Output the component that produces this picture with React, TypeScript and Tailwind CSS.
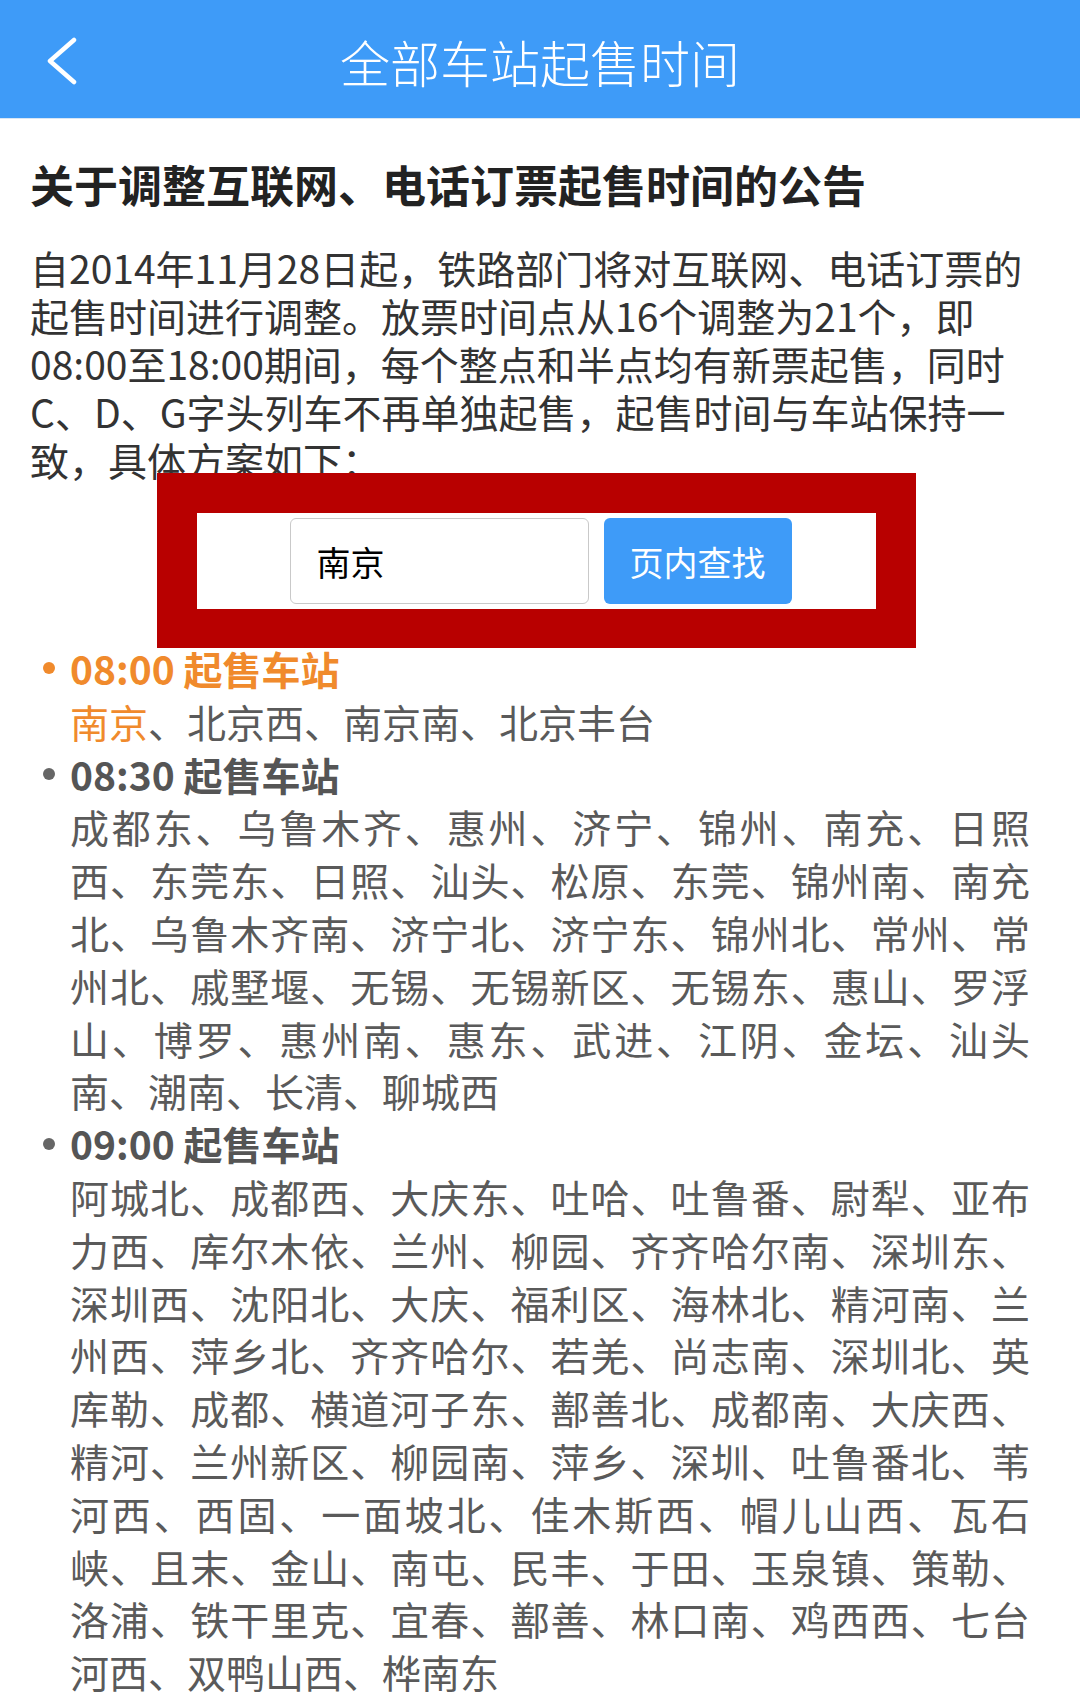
const font = "font-['Noto_Sans_CJK_SC','Noto_Sans',sans-serif]";

const query = "南京";

interface Group {
  time: string;
  stations: string[];
}

const groups: Group[] = [
  { time: "08:00", stations: ["南京", "北京西", "南京南", "北京丰台"] },
  {
    time: "08:30",
    stations: [
      "成都东", "乌鲁木齐", "惠州", "济宁", "锦州", "南充", "日照西", "东莞东", "日照", "汕头",
      "松原", "东莞", "锦州南", "南充北", "乌鲁木齐南", "济宁北", "济宁东", "锦州北", "常州",
      "常州北", "戚墅堰", "无锡", "无锡新区", "无锡东", "惠山", "罗浮山", "博罗", "惠州南",
      "惠东", "武进", "江阴", "金坛", "汕头南", "潮南", "长清", "聊城西",
    ],
  },
  {
    time: "09:00",
    stations: [
      "阿城北", "成都西", "大庆东", "吐哈", "吐鲁番", "尉犁", "亚布力西", "库尔木依", "兰州",
      "柳园", "齐齐哈尔南", "深圳东", "深圳西", "沈阳北", "大庆", "福利区", "海林北", "精河南",
      "兰州西", "萍乡北", "齐齐哈尔", "若羌", "尚志南", "深圳北", "英库勒", "成都", "横道河子东",
      "鄯善北", "成都南", "大庆西", "精河", "兰州新区", "柳园南", "萍乡", "深圳", "吐鲁番北",
      "苇河西", "西固", "一面坡北", "佳木斯西", "帽儿山西", "瓦石峡", "且末", "金山", "南屯",
      "民丰", "于田", "玉泉镇", "策勒", "洛浦", "铁干里克", "宜春", "鄯善", "林口南", "鸡西西",
      "七台河西", "双鸭山西", "桦南东",
    ],
  },
];

function Header() {
  return (
    <div className="grid h-[118px] grid-cols-[1fr_auto_1fr] items-center bg-[#3e9bf8] pt-[3px] shadow-[0_1px_0_#d8e6f5]">
      <div className="pl-[44px]">
        <svg width="36" height="48" viewBox="0 0 36 48" fill="none">
          <polyline
            points="30,3 6,24 30,45"
            stroke="white"
            strokeWidth="4.5"
            strokeLinecap="round"
            strokeLinejoin="round"
          />
        </svg>
      </div>
      <div className="text-[50px] leading-[60px] font-light text-white">全部车站起售时间</div>
      <div />
    </div>
  );
}

function SearchBox() {
  return (
    <div className="relative -mt-[10px] flex justify-center pr-[7px]">
      <div className="w-[759px] bg-[#b80000] p-[40px] pb-[39px]">
        <div className="flex h-[96px] items-center justify-center gap-[15px] bg-white pl-[8px]">
          <div className="flex h-[86px] w-[299px] items-center rounded-[6px] border border-[#c9c9c9] pl-[26px] text-[34px] text-black">
            {query}
          </div>
          <button className="flex h-[86px] w-[188px] items-center justify-center rounded-[6px] bg-[#3e9bf8] text-[34px] text-white">
            页内查找
          </button>
        </div>
      </div>
    </div>
  );
}

function GroupBlock({ group, index }: { group: Group; index: number }) {
  const active = group.stations.includes(query) && index === 0;
  return (
    <div>
      <div className="flex items-center gap-[15px]">
        <span
          className={`h-[12px] w-[12px] rounded-full ${active ? "bg-[#f08a2c]" : "bg-[#666]"}`}
        />
        <span
          className={`text-[39px] leading-[52.8px] font-bold ${active ? "text-[#f08a2c]" : "text-[#555]"}`}
        >
          {group.time} 起售车站
        </span>
      </div>
      <p className="pl-[27px] text-justify text-[39px] leading-[52.8px] text-[#5a5a5a]">
        {group.stations.map((s, i) => (
          <span key={s + i}>
            {i > 0 && "、"}
            {s === query ? <span className="text-[#f08a2c]">{s}</span> : s}
          </span>
        ))}
      </p>
    </div>
  );
}

export default function App() {
  return (
    <div className={`min-h-[1701px] w-[1080px] bg-white ${font}`}>
      <Header />

      <h1 className="mt-[38px] pl-[30px] text-[44px] leading-[56px] font-bold text-[#222]">
        关于调整互联网、电话订票起售时间的公告
      </h1>

      <p className="mt-[31px] pr-[40px] pl-[30px] text-[39px] leading-[48px] text-[#333]">
        自2014年11月28日起，铁路部门将对互联网、电话订票的起售时间进行调整。放票时间点从16个调整为21个，即08:00至18:00期间，每个整点和半点均有新票起售，同时C、D、G字头列车不再单独起售，起售时间与车站保持一致，具体方案如下：
      </p>

      <SearchBox />

      <div className="-mt-[6px] pr-[50px] pl-[43px]">
        {groups.map((g, i) => (
          <GroupBlock key={g.time} group={g} index={i} />
        ))}
      </div>
    </div>
  );
}
